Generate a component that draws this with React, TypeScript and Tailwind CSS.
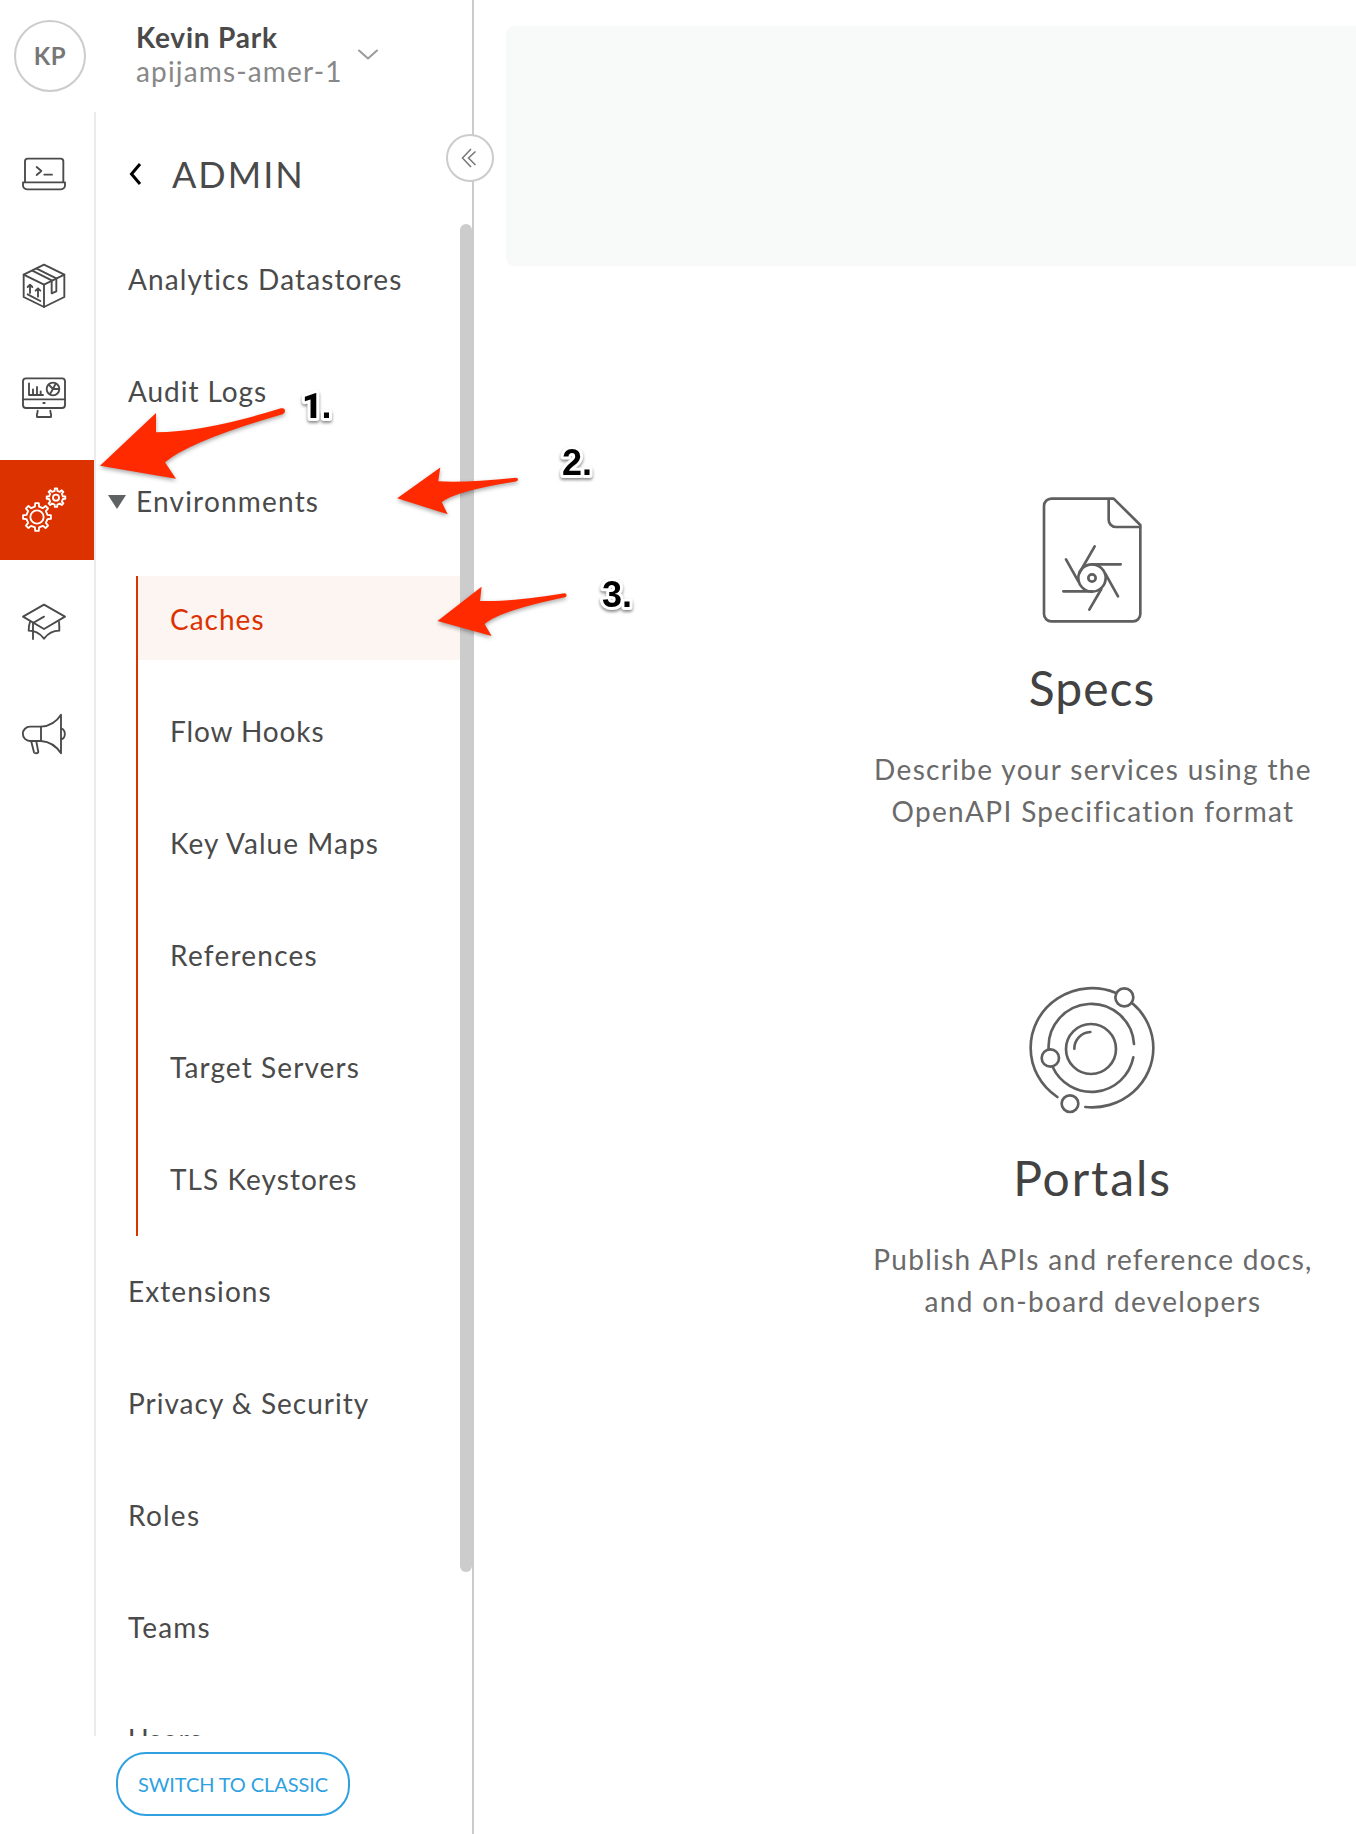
import React from "react";

type IconProps = { viewBox: string; children: React.ReactNode };

function RailIcon({ viewBox, children }: IconProps) {
  return (
    <svg
      width="48"
      height="48"
      viewBox={viewBox}
      fill="none"
      stroke="currentColor"
      strokeWidth="5.600"
      strokeLinecap="round"
      strokeLinejoin="round"
    >
      {children}
    </svg>
  );
}

function gearPath(cx: number, cy: number, teeth: number, inner: number, outer: number) {
  const step = (Math.PI * 2) / teeth;
  const pts: string[] = [];
  for (let i = 0; i < teeth; i++) {
    const a = i * step - Math.PI / 2;
    const corners: [number, number][] = [
      [inner, -0.25],
      [outer, -0.16],
      [outer, 0.16],
      [inner, 0.25],
    ];
    corners.forEach(([r, t]) => {
      const x = cx + r * Math.cos(a + t * step);
      const y = cy + r * Math.sin(a + t * step);
      pts.push(`${x.toFixed(1)} ${y.toFixed(1)}`);
    });
  }
  return `M${pts.join("L")}Z`;
}

const railItems = [
  {
    name: "Develop",
    icon: (
      <RailIcon viewBox="60 60 144 144">
        <path d="M75 156V94a8 8 0 0 1 8-8h99a8 8 0 0 1 8 8v62" />
        <path d="M69 157h126v9a12 12 0 0 1-12 12H81a12 12 0 0 1-12-12z" />
        <path d="M110 111l14 12-14 12M133 134h23" />
      </RailIcon>
    ),
  },
  {
    name: "Publish",
    icon: (
      <RailIcon viewBox="60 396 144 144">
        <path d="M132 404l61 30v67l-61 30-61-30v-67z" />
        <path d="M71 434l61 30 61-30M132 464v67" />
        <path d="M97 422l58 29v39l14-6v-39l-59-29" />
        <path d="M90 489v-24M83 471l7-7 7 7M114 500v-24M107 482l7-7 7 7M83 493l38 20" />
      </RailIcon>
    ),
  },
  {
    name: "Analyze",
    icon: (
      <RailIcon viewBox="60 732 144 144">
        <rect x="69" y="745" width="126" height="89" rx="9" />
        <path d="M69 808h126M130 819h4" />
        <path d="M87 760v35h42M99 795v-17M111 795v-24M122 795v-11" />
        <circle cx="159" cy="777" r="19" />
        <path d="M146 764l13 13h18M159 777l-9 15M159 777l8-16" />
        <path d="M113 842c0 9-4 11-2 19h42c2-8-2-10-2-19" />
      </RailIcon>
    ),
  },
  {
    name: "Admin",
    active: true,
    icon: (
      <RailIcon viewBox="60 108 144 144">
        <path d={gearPath(111, 201, 8, 32, 42)} />
        <circle cx="111" cy="201" r="20" />
        <path d={gearPath(168, 143, 8, 21, 28)} />
        <circle cx="168" cy="143" r="9" />
      </RailIcon>
    ),
  },
  {
    name: "Learn",
    icon: (
      <RailIcon viewBox="60 444 144 144">
        <path d="M132 464l63 36-63 37-63-37z" />
        <path d="M132 500l-33 19v48" />
        <path d="M90 516c-3 8-4 17-4 26 20 0 34 8 46 24 12-16 26-24 46-24 0-9 0-18-1-26" />
      </RailIcon>
    ),
  },
  {
    name: "Announcements",
    icon: (
      <RailIcon viewBox="60 780 144 144">
        <path d="M123 830H90a21 21 0 0 0 0 43h33z" />
        <path d="M123 830c26-2 46-14 60-36v116c-14-22-34-35-60-37" />
        <path d="M184 836c14 4 14 28 0 32M94 875l8 32c2 4 12 4 13-1l-6-31" />
      </RailIcon>
    ),
  },
];

type Item = { label: string; tracking: string };

const topItems: Item[] = [
  { label: "Analytics Datastores", tracking: "tracking-[1.120px]" },
  { label: "Audit Logs", tracking: "tracking-[0.950px]" },
];
const envItems: Item[] = [
  { label: "Caches", tracking: "tracking-[1px]" },
  { label: "Flow Hooks", tracking: "tracking-[0.900px]" },
  { label: "Key Value Maps", tracking: "tracking-[1.050px]" },
  { label: "References", tracking: "tracking-[1.250px]" },
  { label: "Target Servers", tracking: "tracking-[1.100px]" },
  { label: "TLS Keystores", tracking: "tracking-[1.050px]" },
];
const bottomItems: Item[] = [
  { label: "Extensions", tracking: "tracking-[1.080px]" },
  { label: "Privacy & Security", tracking: "tracking-[1px]" },
  { label: "Roles", tracking: "tracking-[1.250px]" },
  { label: "Teams", tracking: "tracking-[1.150px]" },
  { label: "Users", tracking: "tracking-[1.200px]" },
];

function NavItem({ label, tracking }: Item) {
  return (
    <li className="flex h-28 shrink-0 items-center pl-8">
      <span className={tracking}>{label}</span>
    </li>
  );
}

function Header() {
  return (
    <header className="flex h-28 shrink-0">
      <div className="ml-3.5 mt-5 flex size-[72px] items-center justify-center rounded-full border-2 border-[#cccccc] text-2xl font-bold tracking-[0.500px] text-[#777777]">
        KP
      </div>
      <div className="ml-[50px] mt-5 w-[208px] text-[28px] leading-[34px]">
        <div className="font-bold tracking-[0.800px] text-[#4a4a4a]">Kevin Park</div>
        <div className="tracking-[1.150px] text-[#888888]">apijams-amer-1</div>
      </div>
      <svg className="ml-[11px] mt-[46px]" width="24" height="16" fill="none" stroke="#999999" strokeWidth="2" strokeLinecap="round">
        <path d="M4 4.500l9 8L22 4.500" />
      </svg>
    </header>
  );
}

function AdminNav() {
  return (
    <nav className="flex w-[376px] flex-col">
      <div className="flex h-[111px] shrink-0 items-center">
        <svg className="ml-8 mt-3" width="16" height="24" fill="none" stroke="#000000" strokeWidth="3">
          <path d="M12 2L3.500 12L12 22" />
        </svg>
        <h1 className="ml-7 mt-3 text-4xl leading-[44px] tracking-[2px] text-[#4a4a4a]">ADMIN</h1>
      </div>
      <div className="flex min-h-0 flex-1">
        <ul className="flex h-full w-[364px] flex-col overflow-hidden text-[28px] text-[#4a4a4a]">
          {topItems.map((item) => (
            <NavItem key={item.label} {...item} />
          ))}
          <li className="h-[788px] shrink-0">
            <div className="flex h-[108px] items-center pl-3">
              <svg className="mt-0.5" width="18" height="14" fill="#5f6262">
                <path d="M0 0h18L9 14z" />
              </svg>
              <span className="ml-[10px] tracking-[1.200px]">Environments</span>
            </div>
            <ul className="ml-10 mt-[21px] flex h-[660px] flex-col gap-7 border-l-2 border-[#dc3200]">
              {envItems.map((item, i) => (
                <li
                  key={item.label}
                  className={
                    i === 0
                      ? "flex h-[84px] shrink-0 items-center bg-[#fdf5f2] pl-8 pt-0.5 text-[#dc3200]"
                      : "flex h-[84px] shrink-0 items-center pl-8 pt-0.5"
                  }
                >
                  <span className={item.tracking}>{item.label}</span>
                </li>
              ))}
            </ul>
          </li>
          {bottomItems.map((item) => (
            <NavItem key={item.label} {...item} />
          ))}
        </ul>
        <div className="mt-px h-[1348px] w-3 rounded-full bg-[#cccccc]" />
      </div>
    </nav>
  );
}

function SpecsIcon() {
  return (
    <svg width="180" height="180" viewBox="0 0 540 540" fill="none" stroke="#5f5f5f" strokeWidth="8" strokeLinecap="round" strokeLinejoin="round">
      <path d="M154 86H341L421 165V432a22 22 0 0 1-22 22H154a22 22 0 0 1-22-22V108a22 22 0 0 1 22-22z" />
      <path d="M326 88v60a22 22 0 0 0 22 23h72" />
      <circle cx="276" cy="324" r="41" />
      <circle cx="276" cy="324" r="11" />
      <path d="M284 229L238 309M362 283H276M354 379L316 311M268 419L304 357M190 364H276M198 268L235 334" />
    </svg>
  );
}

function PortalsIcon() {
  return (
    <svg width="180" height="180" viewBox="0 0 540 540" fill="none" stroke="#5f5f5f" strokeWidth="8" strokeLinecap="round">
      <path d="M346 98A184 178 0 0 0 92 264A184 178 0 0 0 172 411" />
      <path d="M397 130A184 178 0 0 1 460 264A184 178 0 0 1 256 441" />
      <path d="M146 268A128 128 0 0 1 402 252" />
      <path d="M400 292A128 128 0 0 1 157 319" />
      <circle cx="373" cy="112" r="27" />
      <circle cx="151" cy="294" r="26" />
      <circle cx="210" cy="431" r="25" />
      <circle cx="273" cy="267" r="75" />
      <path d="M223 266A50 50 0 0 1 271 216" />
    </svg>
  );
}

type FeatureProps = { icon: React.ReactNode; title: string; titleTracking: string; lines: string[] };

function Feature({ icon, title, titleTracking, lines }: FeatureProps) {
  return (
    <section className="flex h-[490px] flex-col items-center">
      <div className="mr-1">{icon}</div>
      <h2 className={`mt-[9px] text-5xl leading-[58px] text-[#424242] ${titleTracking}`}>{title}</h2>
      <p className="mt-[31px] pl-0.5 text-center text-[28px] leading-[42px] tracking-[1.330px] text-[#6a6a6a]">
        {lines.map((line) => (
          <span key={line} className="block whitespace-nowrap">
            {line}
          </span>
        ))}
      </p>
    </section>
  );
}

const arrows = [
  "M100 465.700L156 413L156 432.300Q205 432 281 408.300Q285 407.500 285 411Q285 413.300 282.500 414.200Q190 441 165 462.300L176 478.700Z",
  "M397.200 498.300L440.300 467.500L438.200 481.300Q465 483 515.700 477.700Q518 477.700 518 479.300Q518 481.200 516 481.500Q455 491 441.800 502.300L447.700 514.300Z",
  "M437.500 621L481.600 586.700L480 601Q512 602 564.500 593.300Q566.600 593.300 566.600 595.300Q566.600 597 565 597.300Q499 611 484.600 624L491.600 636Z",
];

const stepLabels = [
  { text: "2.", x: "562 582", y: 475 },
  { text: "3.", x: "602 622", y: 607 },
];

function Annotations() {
  return (
    <svg className="pointer-events-none absolute left-0 top-0" width="660" height="700">
      <g fill="#ff2a00" className="[filter:drop-shadow(0_2px_2px_rgb(0_0_0/0.35))]">
        {arrows.map((d) => (
          <path key={d} d={d} />
        ))}
      </g>
      <g
        className="font-['Liberation_Sans',sans-serif] text-[36px] font-bold [filter:drop-shadow(0_2px_1.500px_rgb(0_0_0/0.45))] [paint-order:stroke]"
        fill="#000000"
        stroke="#ffffff"
        strokeWidth="6"
        strokeLinejoin="round"
      >
        <text className="font-['Roboto',sans-serif] text-[35px] font-black" x="302 321.500" y="418">
          1<tspan className="font-['Liberation_Sans',sans-serif] text-[36px] font-bold">.</tspan>
        </text>
        {stepLabels.map((s) => (
          <text key={s.text} x={s.x} y={s.y}>
            {s.text}
          </text>
        ))}
      </g>
    </svg>
  );
}

export default function App() {
  return (
    <div className="relative flex h-[1834px] w-[1356px] overflow-hidden bg-white font-['Lato',sans-serif]">
      <aside className="relative flex w-[474px] shrink-0 flex-col border-r-2 border-[#cccccc]">
        <Header />
        <div className="flex h-[1624px] shrink-0">
          <div className="flex w-24 shrink-0 flex-col gap-3 border-r-2 border-[#ebebeb] pt-3">
            {railItems.map((item) => (
              <a
                key={item.name}
                aria-label={item.name}
                className={
                  item.active
                    ? "flex h-[100px] items-center bg-[#dc3200] pl-5 text-white"
                    : "flex h-[100px] items-center pl-5 text-[#4a4a4a]"
                }
              >
                {item.icon}
              </a>
            ))}
          </div>
          <AdminNav />
        </div>
        <button className="ml-[116px] mt-4 h-16 w-[234px] shrink-0 whitespace-nowrap rounded-[30px] border-2 border-[#30a1e0] text-xl tracking-[-0.100px] text-[#30a1e0]">
          SWITCH TO CLASSIC
        </button>
        <button
          aria-label="Collapse"
          className="absolute left-[446px] top-[134px] flex size-12 items-center justify-center rounded-full border-2 border-[#cccccc] bg-white pr-0.5"
        >
          <svg width="18" height="20" fill="none" stroke="#777777" strokeWidth="1.500">
            <path d="M11 1L2.500 10L11 19M15.500 3.500L8.500 10L15.500 17" />
          </svg>
        </button>
      </aside>
      <main className="flex flex-1 flex-col pl-8 pt-[26px]">
        <div className="h-60 shrink-0 rounded-l-lg bg-[#f8faf9]" />
        <div className="ml-[346px] mt-[204px] w-[480px] shrink-0">
          <Feature
            icon={<SpecsIcon />}
            title="Specs"
            titleTracking="tracking-[1px]"
            lines={["Describe your services using the", "OpenAPI Specification format"]}
          />
          <Feature
            icon={<PortalsIcon />}
            title="Portals"
            titleTracking="pl-px tracking-[1.900px]"
            lines={["Publish APIs and reference docs,", "and on-board developers"]}
          />
        </div>
      </main>
      <Annotations />
    </div>
  );
}
